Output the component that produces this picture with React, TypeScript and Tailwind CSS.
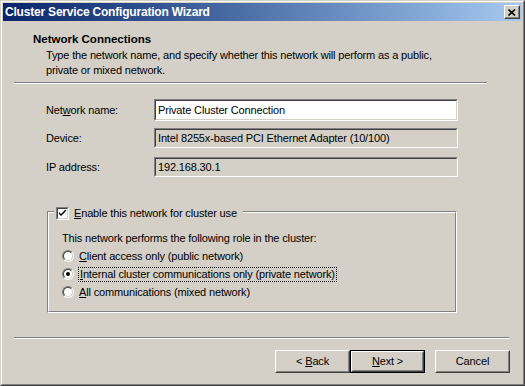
import React from "react"

const Sunken = ({ children, className = "" }: { children?: React.ReactNode; className?: string }) => (
  <div className={`border border-t-[#808080] border-l-[#808080] border-b-white border-r-white ${className}`}>
    <div className="h-full w-full border border-t-[#404040] border-l-[#404040] border-b-[#d4d0c8] border-r-[#d4d0c8]">
      {children}
    </div>
  </div>
)

const Radio = ({ checked }: { checked?: boolean }) => (
  <div className="h-[12px] w-[12px] rounded-full border border-t-[#808080] border-l-[#808080] border-b-white border-r-white">
    <div className="flex h-full w-full items-center justify-center rounded-full border border-t-[#404040] border-l-[#404040] border-b-[#d4d0c8] border-r-[#d4d0c8] bg-white">
      {checked && <div className="h-[4px] w-[4px] rounded-full bg-black" />}
    </div>
  </div>
)

const Button = ({ children, primary }: { children: React.ReactNode; primary?: boolean }) => (
  <div className={`h-[23px] w-[75px] ${primary ? "border border-black" : ""}`}>
    <div className="h-full w-full border border-t-white border-l-white border-b-[#404040] border-r-[#404040]">
      <div className="flex h-full w-full items-center justify-center border border-t-[#d4d0c8] border-l-[#d4d0c8] border-b-[#808080] border-r-[#808080]">
        {children}
      </div>
    </div>
  </div>
)

export default function App() {
  return (
    <div className="flex h-[386px] w-[525px] flex-col border border-t-[#d4d0c8] border-l-[#d4d0c8] border-b-[#404040] border-r-[#404040] font-['Liberation_Sans',Arial,sans-serif] text-[11px] tracking-[-0.15px] text-black">
      <div className="flex flex-1 flex-col border border-t-white border-l-white border-b-[#808080] border-r-[#808080] bg-[#d4d0c8] p-px">
        {/* title bar */}
        <div className="flex h-[18px] items-center justify-between bg-gradient-to-r from-[#0a246a] to-[#a6caf0] pl-[2px] pr-[2px]">
          <span className="text-[12px] font-bold leading-none tracking-[-0.2px] text-white">Cluster Service Configuration Wizard</span>
          <div className="h-[14px] w-[16px] border border-t-white border-l-white border-b-[#404040] border-r-[#404040]">
            <div className="flex h-full w-full items-center justify-center border border-t-[#d4d0c8] border-l-[#d4d0c8] border-b-[#808080] border-r-[#808080] bg-[#d4d0c8]">
              <svg width="8" height="7" viewBox="0 0 8 7">
                <path d="M0.5 0.5 L7 6.5 M7 0.5 L0.5 6.5" stroke="black" strokeWidth="1.6" />
              </svg>
            </div>
          </div>
        </div>

        {/* header */}
        <div className="mt-[12px] pl-[30px] text-[11.5px] font-bold leading-[13px] tracking-normal">Network Connections</div>
        <div className="mt-[2px] pl-[43px] leading-[15px]">
          Type the network name, and specify whether this network will perform as a public,
          <br />
          private or mixed network.
        </div>
        <div className="ml-[11px] mt-[4px] h-[2px] w-[473px] border-t border-b border-t-[#808080] border-b-white" />

        {/* fields */}
        <div className="ml-[43px] mt-[15px] flex flex-col">
          <div className="flex items-center">
            <span className="w-[108px]">
              Net<u>w</u>ork name:
            </span>
            <Sunken className="h-[22px] w-[304px]">
              <div className="flex h-full items-center bg-white pl-[2px]">Private Cluster Connection</div>
            </Sunken>
          </div>
          <div className="mt-[7px] flex items-center">
            <span className="w-[108px]">Device:</span>
            <Sunken className="h-[20px] w-[304px]">
              <div className="flex h-full items-center pl-[2px]">Intel 8255x-based PCI Ethernet Adapter (10/100)</div>
            </Sunken>
          </div>
          <div className="mt-[9px] flex items-center">
            <span className="w-[108px]">IP address:</span>
            <Sunken className="h-[20px] w-[304px]">
              <div className="flex h-full items-center pl-[2px]">192.168.30.1</div>
            </Sunken>
          </div>
        </div>

        {/* group box */}
        <div className="relative ml-[44px] mt-[34px] h-[102px] w-[410px] border border-t-[#808080] border-l-[#808080] border-b-white border-r-white">
          <div className="h-full w-full border border-t-white border-l-white border-b-[#808080] border-r-[#808080] pl-[13px] pt-[16px]">
            <div className="leading-[18px]">This network performs the following role in the cluster:</div>
            <div className="flex h-[18px] items-center">
              <Radio />
              <span className="ml-[5px]">
                <u>C</u>lient access only (public network)
              </span>
            </div>
            <div className="flex h-[18px] items-center">
              <Radio checked />
              <span className="ml-[4px] border border-dotted border-black px-px leading-[13px]">
                <u>I</u>nternal cluster communications only (private network)
              </span>
            </div>
            <div className="flex h-[18px] items-center">
              <Radio />
              <span className="ml-[5px]">
                <u>A</u>ll communications (mixed network)
              </span>
            </div>
          </div>
          <div className="absolute -top-[7px] left-[6px] flex items-center bg-[#d4d0c8] px-[2px]">
            <Sunken className="h-[13px] w-[13px]">
              <div className="flex h-full w-full items-center justify-center bg-white">
                <svg width="7" height="7" viewBox="0 0 7 7">
                  <path d="M0 2 L0 4 L2 6 L7 1 L7 -1 L2 4 Z" fill="black" />
                </svg>
              </div>
            </Sunken>
            <span className="ml-[5px] pr-[4px]">
              <u>E</u>nable this network for cluster use
            </span>
          </div>
        </div>

        {/* bottom separator */}
        <div className="ml-[11px] mt-[24px] h-[2px] w-[495px] border-t border-b border-t-[#808080] border-b-white" />

        {/* buttons */}
        <div className="mt-[11px] flex pr-[12px]">
          <div className="ml-auto flex">
            <Button>
              &lt; <u className="ml-[3px]">B</u>ack
            </Button>
            <Button primary>
              <u>N</u>ext &gt;
            </Button>
          </div>
          <div className="ml-[10px]">
            <Button>Cancel</Button>
          </div>
        </div>
      </div>
    </div>
  )
}
